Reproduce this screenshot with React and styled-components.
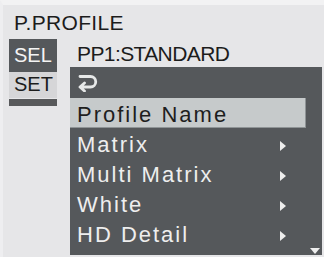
import React from "react";
import styled, { createGlobalStyle } from "styled-components";

const GlobalStyle = createGlobalStyle`
  html, body {
    margin: 0;
    padding: 0;
    background: #e6e6e8;
  }
  body {
    font-family: "Liberation Sans", Arial, sans-serif;
  }
`;

const items = [
  { label: "Profile Name", selected: true },
  { label: "Matrix", sub: true },
  { label: "Multi Matrix", sub: true },
  { label: "White", sub: true },
  { label: "HD Detail", sub: true },
];

const App = () => {
  return (
    <>
      <GlobalStyle />
      <Screen>
        <Title>P.PROFILE</Title>
        <Body>
          <Side>
            <SideTab active={1}>SEL</SideTab>
            <SideTab>SET</SideTab>
            <SideBar />
          </Side>
          <Main>
            <Status>PP1:STANDARD</Status>
            <Panel>
              <ReturnRow>
                <svg width="21" height="19" viewBox="0 0 21 19">
                  <path
                    d="M3 3.5 H13.5 A5.25 5.25 0 0 1 13.5 14 H3.5 M7.5 10 L3 14 L7.5 18"
                    fill="none"
                    stroke="#e6e8e8"
                    strokeWidth="2.8"
                    strokeLinecap="round"
                    strokeLinejoin="round"
                  />
                </svg>
              </ReturnRow>
              {items.map((item) => (
                <Row key={item.label} selected={item.selected ? 1 : 0}>
                  <Label>{item.label}</Label>
                  {item.sub && <SubArrow />}
                </Row>
              ))}
              <MoreArrow />
            </Panel>
          </Main>
        </Body>
      </Screen>
    </>
  );
};

const Screen = styled.div`
  width: 321px;
  height: 252px;
  overflow: hidden;
  background: #e6e6e8;
  border-top: 5px solid #f2f2f3;
  border-left: 3px solid #eeeef0;
`;

const Title = styled.div`
  margin-top: 6px;
  padding-left: 11px;
  height: 24px;
  line-height: 24px;
  font-size: 21px;
  letter-spacing: 0.3px;
  color: #1c1c1c;
`;

const Body = styled.div`
  display: flex;
  margin-top: 4px;
  padding-left: 6px;
  gap: 13px;
`;

const Side = styled.div`
  width: 48px;
  display: flex;
  flex-direction: column;
`;

const SideTab = styled.div`
  height: ${(props) => (props.active ? "33px" : "26px")};
  line-height: ${(props) => (props.active ? "33px" : "24px")};
  padding-left: 5px;
  font-size: 20px;
  background: ${(props) => (props.active ? "#55585b" : "#d6d6d8")};
  color: ${(props) => (props.active ? "#f4f4f4" : "#1c1c1c")};
`;

const SideBar = styled.div`
  height: 7px;
  margin-top: 1px;
  background: #58595b;
`;

const Main = styled.div`
  width: 252px;
  display: flex;
  flex-direction: column;
`;

const Status = styled.div`
  height: 28px;
  box-sizing: border-box;
  padding: 2px 0 0 7px;
  line-height: 26px;
  font-size: 21px;
  letter-spacing: -0.6px;
  color: #1c1c1c;
`;

const Panel = styled.div`
  position: relative;
  height: 188px;
  background: #55585b;
`;

const ReturnRow = styled.div`
  height: 31px;
  box-sizing: border-box;
  padding: 6px 0 0 7px;
`;

const Row = styled.div`
  display: flex;
  align-items: flex-start;
  height: 30px;
  box-sizing: border-box;
  width: ${(props) => (props.selected ? "236px" : "252px")};
  padding: 3px 0 0 7px;
  background: ${(props) => (props.selected ? "#c6cacb" : "transparent")};
  color: ${(props) => (props.selected ? "#1e1e1e" : "#eeeeee")};
  border-right: ${(props) => (props.selected ? "1px solid #8f9496" : "none")};
  border-bottom: ${(props) => (props.selected ? "1px solid #8f9496" : "none")};
`;

const Label = styled.span`
  flex: 1;
  font-size: 22px;
  line-height: 27px;
  letter-spacing: 2px;
`;

const SubArrow = styled.span`
  width: 0;
  height: 0;
  margin: 10px 36px 0 0;
  border-left: 6px solid #eeeeee;
  border-top: 5px solid transparent;
  border-bottom: 5px solid transparent;
`;

const MoreArrow = styled.span`
  position: absolute;
  right: 2px;
  bottom: 1px;
  width: 0;
  height: 0;
  border-top: 6px solid #eeeeee;
  border-left: 5px solid transparent;
  border-right: 5px solid transparent;
`;

export default App;
